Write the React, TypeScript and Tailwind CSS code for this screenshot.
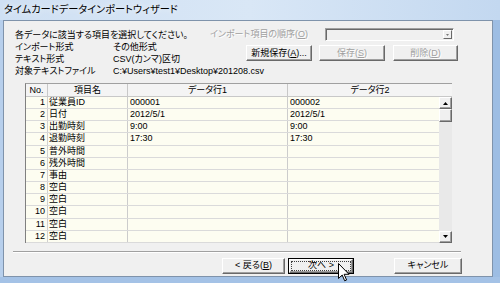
const font =
  "font-['Liberation_Sans','Noto_Sans_CJK_JP',sans-serif] [font-feature-settings:'palt']";

const rows = [
  ["1", "従業員ID", "000001", "000002"],
  ["2", "日付", "2012/5/1", "2012/5/1"],
  ["3", "出勤時刻", "9:00", "9:00"],
  ["4", "退勤時刻", "17:30", "17:30"],
  ["5", "普外時間", "", ""],
  ["6", "残外時間", "", ""],
  ["7", "事由", "", ""],
  ["8", "空白", "", ""],
  ["9", "空白", "", ""],
  ["10", "空白", "", ""],
  ["11", "空白", "", ""],
  ["12", "空白", "", ""],
];

function Button({
  children,
  className,
  disabled,
}: {
  children: React.ReactNode;
  className: string;
  disabled?: boolean;
}) {
  return (
    <div
      className={`flex h-[16px] items-center justify-center border border-t-white border-l-white border-r-[#696969] border-b-[#696969] bg-[#f0f0f0] text-[9px] leading-none shadow-[inset_-1px_-1px_0_#a0a0a0] ${
        disabled ? "text-[#a0a0a0] [text-shadow:1px_1px_0_#fff]" : "text-black"
      } ${className}`}
    >
      {children}
    </div>
  );
}

function ScrollArrow({ up }: { up?: boolean }) {
  return (
    <div className="flex h-[12px] w-[13px] items-center justify-center border border-t-white border-l-white border-r-[#696969] border-b-[#696969] bg-[#f0f0f0] shadow-[inset_-1px_-1px_0_#a0a0a0]">
      <svg width="5" height="3" viewBox="0 0 5 3">
        {up ? <path d="M2.5 0L5 3H0z" fill="#000" /> : <path d="M0 0h5L2.5 3z" fill="#000" />}
      </svg>
    </div>
  );
}

export default function App() {
  return (
    <div className={`relative h-[283px] w-[500px] overflow-hidden bg-[#a4c2e6] ${font}`}>
      {/* title bar */}
      <div className="flex h-[20px] items-center bg-linear-to-r from-[#cfe0f3] via-[#d9e7f6] to-[#c3d8f0] pl-[4px]">
        <span className="text-[10.2px] leading-none text-black [text-shadow:0_0_6px_#fff]">
          タイムカードデータインポートウィザード
        </span>
      </div>

      <div className="flex h-[257px]">
        <div className="w-[3px] bg-[#b7cfec]" />

        {/* client area */}
        <div className="w-[490px] border border-[#7f93ab] bg-[#f0f0f0] text-[9px] text-black">
          <div className="flex pl-[11px] pt-[7px]">
            <div className="flex w-[195px] flex-col pt-[1px] leading-[12px]">
              <div className="h-[12px] whitespace-nowrap">各データに該当する項目を選択してください。</div>
              <div className="flex h-[12px]">
                <span className="w-[98px]">インポート形式</span>
                <span>その他形式</span>
              </div>
              <div className="flex h-[12px]">
                <span className="w-[98px]">テキスト形式</span>
                <span>CSV(カンマ)区切</span>
              </div>
              <div className="flex h-[12px] whitespace-nowrap">
                <span className="w-[98px] shrink-0">対象テキストファイル</span>
                <span>C:¥Users¥test1¥Desktop¥201208.csv</span>
              </div>
            </div>

            <div className="flex flex-col">
              <div className="flex h-[13px] items-center">
                <span className="w-[115px] whitespace-nowrap text-[#a0a0a0] [text-shadow:1px_1px_0_#fff]">
                  インポート項目の順序(<u>O</u>)
                </span>
                <div className="flex h-[13px] w-[129px] justify-end border border-t-[#a0a0a0] border-l-[#a0a0a0] border-r-white border-b-white bg-[#f0f0f0] shadow-[inset_1px_1px_0_#696969] p-[1px] pl-0">
                  <div className="flex h-[9px] w-[9px] items-center justify-center border border-t-white border-l-white border-r-[#696969] border-b-[#696969] bg-[#f0f0f0]">
                    <svg width="3" height="2" viewBox="0 0 3 2">
                      <path d="M0 0h3L1.5 2z" fill="#7a7a7a" />
                    </svg>
                  </div>
                </div>
              </div>
              <div className="mt-[4px] flex pl-[36px]">
                <Button className="w-[66px] whitespace-nowrap">
                  新規保存(<u>A</u>)...
                </Button>
                <Button className="ml-[7px] w-[66px]" disabled>
                  保存(<u>S</u>)
                </Button>
                <Button className="ml-[8px] w-[65px]" disabled>
                  削除(<u>D</u>)
                </Button>
              </div>
            </div>
          </div>

          {/* grid */}
          <div className="ml-[21px] mt-[6px] w-[427px] border-l border-t border-l-[#808080] border-t-[#a0a0a0]">
            <div className="flex h-[13px] bg-[#f4f4f4] leading-[12px]">
              <div className="w-[22px] border-r border-b border-r-[#c8c8c8] border-b-[#c8c8c8] text-center">No.</div>
              <div className="w-[80px] border-r border-b border-r-[#c8c8c8] border-b-[#c8c8c8] text-center">項目名</div>
              <div className="w-[160px] border-r border-b border-r-[#c8c8c8] border-b-[#c8c8c8] text-center">データ行1</div>
              <div className="flex-1 border-b border-b-[#c8c8c8] text-center">データ行2</div>
            </div>
            <div className="flex">
              <div className="w-[413px] bg-[#fdfdf1]">
                {rows.map((r) => (
                  <div key={r[0]} className="flex h-[12.17px] border-b border-[#dadada] leading-[11px]">
                    <div className="w-[22px] border-r border-[#d0d0d0] pr-[2px] text-right">{r[0]}</div>
                    <div className="w-[80px] border-r border-[#cccccc] pl-[1px]">{r[1]}</div>
                    <div className="w-[160px] border-r border-[#cccccc] pl-[2px]">{r[2]}</div>
                    <div className="flex-1 pl-[2px]">{r[3]}</div>
                  </div>
                ))}
              </div>
              <div className="flex w-[13px] flex-col bg-[#e9e9e9]">
                <ScrollArrow up />
                <div className="h-[13px] border border-t-white border-l-white border-r-[#696969] border-b-[#696969] bg-[#f0f0f0] shadow-[inset_-1px_-1px_0_#a0a0a0]" />
                <div className="flex-1" />
                <ScrollArrow />
              </div>
            </div>
          </div>

          <div className="ml-[9px] mt-[8px] h-[2px] w-[448px] border-t border-b border-t-[#a0a0a0] border-b-white" />

          <div className="ml-[218px] mt-[5px] flex">
            <Button className="w-[63px]">
              &lt; 戻る(<u>B</u>)
            </Button>
            <div className="ml-[3px] h-[16px] w-[66px] border border-black">
              <div className="h-full border border-t-white border-l-white border-r-[#696969] border-b-[#696969] bg-[#f0f0f0] p-[1px] shadow-[inset_-1px_-1px_0_#a0a0a0]">
                <div className="flex h-full items-center justify-center border border-dotted border-[#404040] leading-none">
                  次へ &gt;
                </div>
              </div>
            </div>
            <Button className="ml-[40px] w-[68px]">キャンセル</Button>
          </div>
        </div>

        <div className="flex-1 bg-[#9dbde3]" />
      </div>

      {/* mouse pointer */}
      <svg
        className="absolute left-[338px] top-[263px]"
        width="12"
        height="19"
        viewBox="0 0 12 19"
      >
        <path
          d="M0.5 0.5V15.5L4.2 12L6.7 17.8L8.6 17L6.1 11.3H11Z"
          fill="#fff"
          stroke="#000"
          strokeWidth="1"
          strokeLinejoin="miter"
        />
      </svg>
    </div>
  );
}
